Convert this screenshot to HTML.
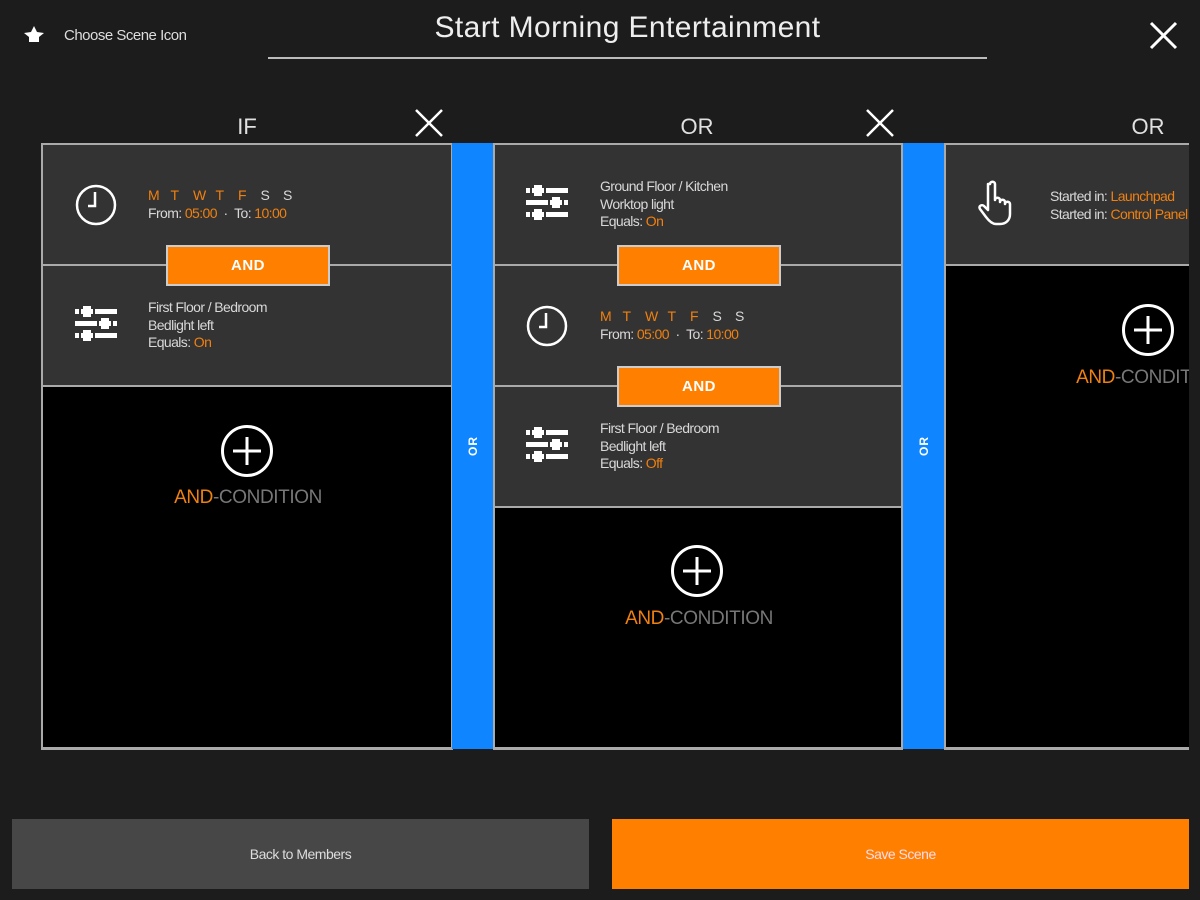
<!DOCTYPE html>
<html><head><meta charset="utf-8"><style>
*{margin:0;padding:0;box-sizing:border-box}
body{width:1200px;height:900px;background:#1c1c1c;font-family:"Liberation Sans",sans-serif;color:#ddd;position:relative;overflow:hidden}
.a{position:absolute}
.t{font-size:14px;letter-spacing:-0.6px;line-height:17.5px;color:#d8d8d8}
.o{color:#f08010}
.col{position:absolute;top:143px;height:607px;background:#000;border:2px solid #aaa;border-bottom-width:3px}
.sec{position:absolute;left:0;right:0;height:121px;background:#333;border-bottom:2px solid #aaa}
.blue{position:absolute;top:143px;height:606px;width:41px;background:#0f86ff}
.blue span{position:absolute;left:50%;top:50%;transform:translate(-50%,-50%) rotate(-90deg);color:#fff;font-weight:bold;font-size:12px;letter-spacing:1px}
.and{position:absolute;width:164px;height:41px;background:#ff7f00;border:2px solid #ccc;color:#fff;font-weight:bold;font-size:15px;text-align:center;line-height:37px;letter-spacing:0.5px;z-index:3}
.hdr{position:absolute;top:114px;font-size:22px;color:#e0e0e0;transform:translateX(-50%)}
.cond{position:absolute;font-size:19px;letter-spacing:-0.4px;color:#777;transform:translateX(-50%);white-space:nowrap}
.days span{display:inline-block;width:22.5px}
</style></head><body>
<svg class="a" style="left:22px;top:25px" width="24" height="20" viewBox="0 0 24 20"><path d="M12 1 L15 7 L22 8 L17 12 L17 17 L7 17 L7 12 L2 8 L9 7 Z" fill="#fff"/></svg>
<div class="a" style="left:64px;top:27px;font-size:15px;letter-spacing:-0.5px;color:#ddd">Choose Scene Icon</div>
<div class="a" style="left:268px;width:719px;top:11px;text-align:center;font-size:30px;color:#eee;letter-spacing:0.4px">Start Morning Entertainment</div>
<div class="a" style="left:268px;top:57px;width:719px;height:2px;background:#bbb"></div>
<svg class="a" style="left:1148px;top:20px" width="31" height="31"><path d="M3 3L28 28M28 3L3 28" stroke="#fff" stroke-width="3"/></svg>

<div class="hdr" style="left:247px">IF</div>
<div class="hdr" style="left:697px">OR</div>
<div class="hdr" style="left:1148px">OR</div>
<svg class="a" style="left:414px;top:108px" width="30" height="30"><path d="M2 2L28 28M28 2L2 28" stroke="#fff" stroke-width="2.5"/></svg>
<svg class="a" style="left:865px;top:108px" width="30" height="30"><path d="M2 2L28 28M28 2L2 28" stroke="#fff" stroke-width="2.5"/></svg>

<!-- column 1 -->
<div class="col" style="left:41px;width:412px">
 <div class="sec" style="top:0"></div>
 <div class="sec" style="top:121px"></div>
</div>
<svg class="a" style="left:74px;top:183px" width="44" height="44"><circle cx="22" cy="22" r="19" fill="none" stroke="#fff" stroke-width="2.5"/><path d="M21 9V23H14" fill="none" stroke="#fff" stroke-width="2.5"/></svg>
<div class="a t" style="left:148px;top:187px"><div class="days"><span class="o">M</span><span class="o">T</span><span class="o">W</span><span class="o">T</span><span class="o">F</span><span>S</span><span>S</span></div>From: <span class="o">05:00</span> &nbsp;· &nbsp;To: <span class="o">10:00</span></div>
<div class="and" style="left:166px;top:245px">AND</div>
<svg class="a" style="left:74px;top:306px" width="46" height="36" viewBox="0 0 46 36"><g fill="#fff"><rect x="1" y="3" width="42" height="5"/><rect x="9" y="0" width="8" height="11"/><rect x="1" y="15" width="42" height="5"/><rect x="27" y="12" width="8" height="11"/><rect x="1" y="27" width="42" height="5"/><rect x="9" y="24" width="8" height="11"/></g><g fill="#333"><rect x="5" y="3" width="2" height="5"/><rect x="19" y="3" width="2" height="5"/><rect x="23" y="15" width="2" height="5"/><rect x="37" y="15" width="2" height="5"/><rect x="5" y="27" width="2" height="5"/><rect x="19" y="27" width="2" height="5"/></g></svg>
<div class="a t" style="left:148px;top:299px">First Floor / Bedroom<br>Bedlight left<br>Equals: <span class="o">On</span></div>
<svg class="a" style="left:220px;top:424px" width="54" height="54"><circle cx="27" cy="27" r="24.5" fill="none" stroke="#fff" stroke-width="3"/><path d="M27 13V41M13 27H41" stroke="#fff" stroke-width="3"/></svg>
<div class="cond" style="left:248px;top:487px"><span class="o">AND</span>-CONDITION</div>

<div class="blue" style="left:452px"><span>OR</span></div>

<!-- column 2 -->
<div class="col" style="left:493px;width:410px">
 <div class="sec" style="top:0"></div>
 <div class="sec" style="top:121px"></div>
 <div class="sec" style="top:242px"></div>
</div>
<svg class="a" style="left:525px;top:185px" width="46" height="36" viewBox="0 0 46 36"><g fill="#fff"><rect x="1" y="3" width="42" height="5"/><rect x="9" y="0" width="8" height="11"/><rect x="1" y="15" width="42" height="5"/><rect x="27" y="12" width="8" height="11"/><rect x="1" y="27" width="42" height="5"/><rect x="9" y="24" width="8" height="11"/></g><g fill="#333"><rect x="5" y="3" width="2" height="5"/><rect x="19" y="3" width="2" height="5"/><rect x="23" y="15" width="2" height="5"/><rect x="37" y="15" width="2" height="5"/><rect x="5" y="27" width="2" height="5"/><rect x="19" y="27" width="2" height="5"/></g></svg>
<div class="a t" style="left:600px;top:178px">Ground Floor / Kitchen<br>Worktop light<br>Equals: <span class="o">On</span></div>
<div class="and" style="left:617px;top:245px">AND</div>
<svg class="a" style="left:525px;top:304px" width="44" height="44"><circle cx="22" cy="22" r="19" fill="none" stroke="#fff" stroke-width="2.5"/><path d="M21 9V23H14" fill="none" stroke="#fff" stroke-width="2.5"/></svg>
<div class="a t" style="left:600px;top:308px"><div class="days"><span class="o">M</span><span class="o">T</span><span class="o">W</span><span class="o">T</span><span class="o">F</span><span>S</span><span>S</span></div>From: <span class="o">05:00</span> &nbsp;· &nbsp;To: <span class="o">10:00</span></div>
<div class="and" style="left:617px;top:366px">AND</div>
<svg class="a" style="left:525px;top:427px" width="46" height="36" viewBox="0 0 46 36"><g fill="#fff"><rect x="1" y="3" width="42" height="5"/><rect x="9" y="0" width="8" height="11"/><rect x="1" y="15" width="42" height="5"/><rect x="27" y="12" width="8" height="11"/><rect x="1" y="27" width="42" height="5"/><rect x="9" y="24" width="8" height="11"/></g><g fill="#333"><rect x="5" y="3" width="2" height="5"/><rect x="19" y="3" width="2" height="5"/><rect x="23" y="15" width="2" height="5"/><rect x="37" y="15" width="2" height="5"/><rect x="5" y="27" width="2" height="5"/><rect x="19" y="27" width="2" height="5"/></g></svg>
<div class="a t" style="left:600px;top:420px">First Floor / Bedroom<br>Bedlight left<br>Equals: <span class="o">Off</span></div>
<svg class="a" style="left:670px;top:544px" width="54" height="54"><circle cx="27" cy="27" r="24.5" fill="none" stroke="#fff" stroke-width="3"/><path d="M27 13V41M13 27H41" stroke="#fff" stroke-width="3"/></svg>
<div class="cond" style="left:699px;top:608px"><span class="o">AND</span>-CONDITION</div>

<div class="blue" style="left:903px"><span>OR</span></div>

<!-- column 3 clipped -->
<div class="a" style="left:944px;top:143px;width:245px;height:607px;overflow:hidden">
 <div class="col" style="left:0;top:0;width:420px">
  <div class="sec" style="top:0"></div>
 </div>
 <svg class="a" style="left:34px;top:37px" width="40" height="48" viewBox="0 0 40 48"><path d="M12 4c0-3 5-3 5 0v16c0-3 5-3 5 0v2c0-3 5-3 5 0v2c0-3 5-3 5 0v10c0 6-4 10-10 10h-4c-4 0-7-3-10-7l-6-8c-2-3 2-5 4-3l4 4V4z" fill="none" stroke="#fff" stroke-width="2.5" stroke-linejoin="round"/></svg>
 <div class="a t" style="left:106px;top:45px;white-space:nowrap">Started in: <span class="o">Launchpad</span><br>Started in: <span class="o">Control Panel</span></div>
 <svg class="a" style="left:177px;top:160px" width="54" height="54"><circle cx="27" cy="27" r="24.5" fill="none" stroke="#fff" stroke-width="3"/><path d="M27 13V41M13 27H41" stroke="#fff" stroke-width="3"/></svg>
 <div class="cond" style="left:206px;top:224px"><span class="o">AND</span>-CONDITION</div>
</div>

<div class="a" style="left:12px;top:819px;width:577px;height:70px;background:#474747;color:#ddd;font-size:14px;letter-spacing:-0.5px;text-align:center;line-height:70px">Back to Members</div>
<div class="a" style="left:612px;top:819px;width:577px;height:70px;background:#ff7f00;color:#fde;font-size:14px;letter-spacing:-0.5px;text-align:center;line-height:70px">Save Scene</div>
</body></html>
